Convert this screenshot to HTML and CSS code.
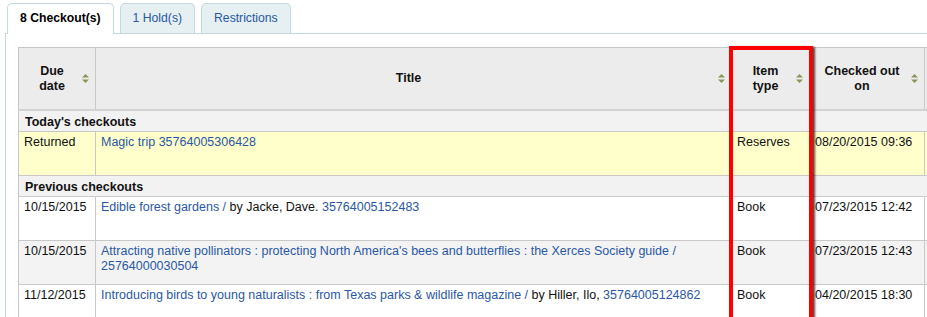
FILE: index.html
```html
<!DOCTYPE html>
<html>
<head>
<meta charset="utf-8">
<link rel="stylesheet" href="styles.css">
</head>
<body>
<div class="tabs">
  <div class="tab active">8 Checkout(s)</div>
  <div class="tab">1 Hold(s)</div>
  <div class="tab">Restrictions</div>
</div>
<div class="panel">
  <div class="tablewrap">
    <table class="grid">
      <colgroup>
        <col class="c-due"><col class="c-title"><col class="c-type"><col class="c-out"><col class="c-more">
      </colgroup>
      <thead>
        <tr>
          <th><div class="hd"><span class="hd-text">Due<br>date</span><svg class="sort" viewBox="0 0 7 9"><path d="M3.5 0L7 3.6H0z"/><path d="M3.5 9L0 5.4H7z"/></svg></div></th>
          <th><div class="hd"><span class="hd-text">Title</span><svg class="sort" viewBox="0 0 7 9"><path d="M3.5 0L7 3.6H0z"/><path d="M3.5 9L0 5.4H7z"/></svg></div></th>
          <th><div class="hd"><span class="hd-text">Item<br>type</span><svg class="sort" viewBox="0 0 7 9"><path d="M3.5 0L7 3.6H0z"/><path d="M3.5 9L0 5.4H7z"/></svg></div></th>
          <th><div class="hd"><span class="hd-text">Checked out<br>on</span><svg class="sort" viewBox="0 0 7 9"><path d="M3.5 0L7 3.6H0z"/><path d="M3.5 9L0 5.4H7z"/></svg></div></th>
          <th></th>
        </tr>
      </thead>
      <tbody>
        <tr class="group"><td colspan="5">Today's checkouts</td></tr>
        <tr class="row today">
          <td>Returned</td>
          <td><a href="#">Magic trip</a> <a href="#">35764005306428</a></td>
          <td>Reserves</td>
          <td>08/20/2015 09:36</td>
          <td></td>
        </tr>
        <tr class="group"><td colspan="5">Previous checkouts</td></tr>
        <tr class="row">
          <td>10/15/2015</td>
          <td><a href="#">Edible forest gardens /</a> by Jacke, Dave. <a href="#">35764005152483</a></td>
          <td>Book</td>
          <td>07/23/2015 12:42</td>
          <td></td>
        </tr>
        <tr class="row alt">
          <td>10/15/2015</td>
          <td><a href="#">Attracting native pollinators : protecting North America's bees and butterflies : the Xerces Society guide /</a> <a href="#">25764000030504</a></td>
          <td>Book</td>
          <td>07/23/2015 12:43</td>
          <td></td>
        </tr>
        <tr class="row">
          <td>11/12/2015</td>
          <td><a href="#">Introducing birds to young naturalists : from Texas parks &amp; wildlife magazine /</a> by Hiller, Ilo, <a href="#">35764005124862</a></td>
          <td>Book</td>
          <td>04/20/2015 18:30</td>
          <td></td>
        </tr>
      </tbody>
    </table>
    <div class="highlight"></div>
  </div>
</div>
</body>
</html>
```
FILE: styles.css
```css
html, body {
  margin: 0;
  overflow: hidden;
  background: #fff;
}
body {
  font-family: "Liberation Sans", Arial, sans-serif;
  font-size: 12.5px;
  color: #111;
  padding: 3px 0 0 5px;
  width: 1300px;
}
.tabs {
  display: flex;
  gap: 6px;
  margin-left: 2px;
  position: relative;
  z-index: 1;
}
.tab {
  height: 29px;
  line-height: 29px;
  padding: 0 12px;
  border: 1px solid #c4d9dc;
  border-bottom: none;
  border-radius: 5px 5px 0 0;
  background: #e6eff1;
  color: #2a58a4;
  font-size: 12.2px;
}
.tab.active {
  background: #fff;
  color: #000;
  font-weight: bold;
  height: 30px;
  margin-bottom: -1px;
}
.tab:not(.active) {
  align-self: flex-start;
}
.panel {
  border: 1px solid #c4d9dc;
  padding: 13px 0 0 12px;
  width: 1250px;
  height: 400px;
}
.tablewrap {
  position: relative;
}
.grid {
  border-collapse: collapse;
  table-layout: fixed;
  width: 1026px;
}
.c-due { width: 77px; }
.c-title { width: 636px; }
.c-type { width: 78px; }
.c-out { width: 115px; }
.c-more { width: 120px; }
.grid th {
  background: #ececec;
  border: 1px solid #c8c8c8;
  border-bottom: 2px solid #d3d3d3;
  height: 61px;
  padding: 0;
  font-weight: bold;
  line-height: 15px;
}
.hd {
  display: flex;
  align-items: center;
  padding: 0 6px 0 5px;
}
.hd-text {
  flex: 1;
  text-align: center;
}
.sort {
  width: 7px;
  height: 9px;
  fill: #8e9357;
  margin-left: 2px;
}
.grid td {
  border: 1px solid #c8c8c8;
  padding: 3px 5px 0 5px;
  vertical-align: top;
  line-height: 15px;
}
.group td {
  background: #f2f2f2;
  font-weight: bold;
  height: 17px;
  padding: 3px 5px 0 6px;
  vertical-align: middle;
}
.row td {
  height: 40px;
  background: #fff;
}
.row.alt td {
  background: #f3f3f3;
}
.row.today td {
  background: #ffffcc;
}
.grid a {
  color: #2a58a4;
  text-decoration: none;
}
.highlight {
  position: absolute;
  left: 711px;
  top: -1px;
  width: 76px;
  height: 400px;
  border: 4px solid #f00;
  box-shadow: 2px 1px 2px rgba(0, 0, 0, 0.7);
  pointer-events: none;
}
```
